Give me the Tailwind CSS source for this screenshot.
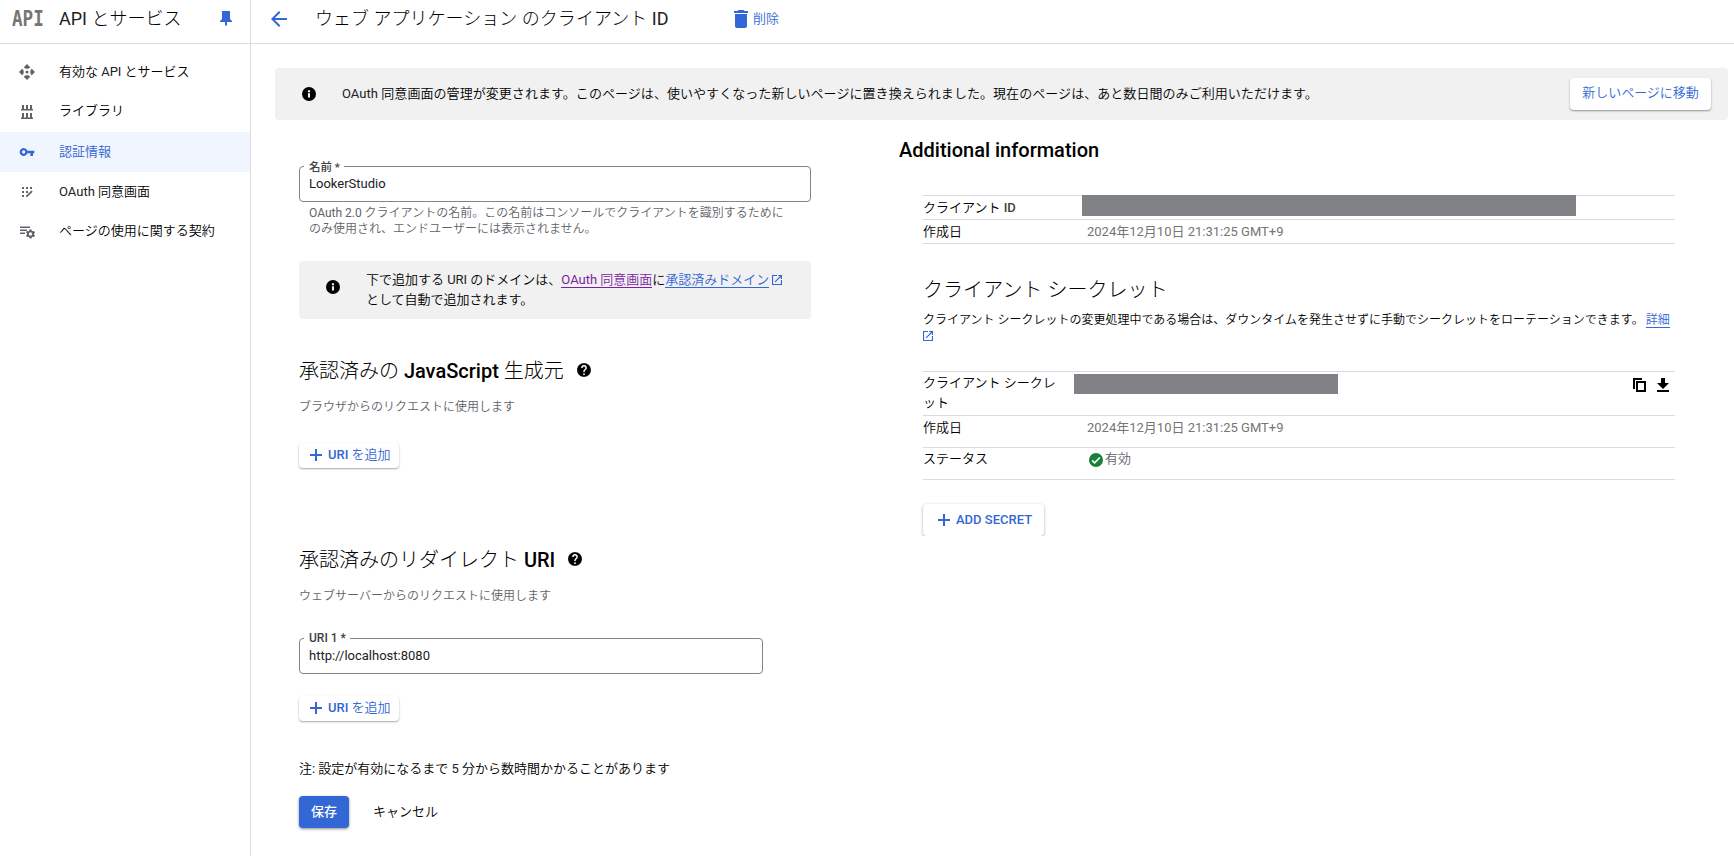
<!DOCTYPE html>
<html lang="ja">
<head>
    <meta charset="UTF-8">
    <meta name="viewport" content="width=device-width, initial-scale=1.0">
    <title>ウェブ アプリケーション のクライアント ID</title>
    <script src="https://cdn.jsdelivr.net/npm/@tailwindcss/browser@4"></script>
</head>
<body class="h-screen overflow-hidden bg-white font-['Roboto','Noto_Sans_CJK_JP',sans-serif] text-[13px] leading-5 font-[350] text-black">
    <!-- Iconos compartidos -->
    <svg class="hidden">
        <symbol id="info" viewBox="2 2 20 20"><path d="M12 2a10 10 0 1 0 0 20 10 10 0 0 0 0-20zm1.500 15h-3v-6h3v6zm0-7.500h-3V6.500h3v3z"/></symbol>
        <symbol id="help" viewBox="2 2 20 20"><path d="M12 2C6.48 2 2 6.48 2 12s4.48 10 10 10 10-4.48 10-10S17.52 2 12 2zm1 17h-2v-2h2v2zm2.07-7.75-.9.92C13.45 12.9 13 13.5 13 15h-2v-.5c0-1.1.45-2.1 1.17-2.83l1.24-1.26c.37-.36.59-.86.59-1.41 0-1.1-.9-2-2-2s-2 .9-2 2H8c0-2.21 1.79-4 4-4s4 1.79 4 4c0 .88-.36 1.68-.93 2.25z" stroke="#fff" stroke-width=".3"/></symbol>
        <symbol id="plus" viewBox="0 0 12 12"><path d="M5 0h2v5h5v2H7v5H5V7H0V5h5z"/></symbol>
        <symbol id="launch" viewBox="3 3 18 18"><path d="M19 19H5V5h7V3H3v18h18v-9h-2v7zM14 3v2h3.59l-9.83 9.83 1.41 1.41L19 6.41V10h2V3h-7z"/></symbol>
    </svg>

    <div class="flex h-full">
        <!-- Menú lateral -->
        <nav class="w-[251px] shrink-0 border-r border-[#dadce0]">
            <div class="flex h-11 items-center border-b border-[#dadce0] pb-[6px] pl-3">
                <span class="mt-[1px] w-[47px] origin-left scale-x-[0.84] font-['DejaVu_Sans_Mono'] text-[21px] leading-8 font-bold text-[#757575]">API</span>
                <span class="w-[161px] text-lg font-light"><span class="font-normal text-[#202124]">API</span> とサービス</span>
                <svg class="h-[15px] w-3 fill-[#3367d6]" viewBox="0 0 12 15"><path d="M2 0h8v8l2 2v1H7v3l-1 1-1-1v-3H0v-1l2-2z"/></svg>
            </div>
            <ul class="pt-2">
                <li class="flex h-10 items-center gap-6 pl-[19px]">
                    <svg class="size-4 fill-[#5f6368]" viewBox="0 0 16 16"><path d="M8 0l3.200 3.200-1.500 1.500L8 3 6.300 4.700 4.800 3.200zM16 8l-3.200 3.200-1.500-1.500L13 8l-1.700-1.700 1.500-1.500zM8 16l-3.200-3.200 1.500-1.500L8 13l1.700-1.700 1.500 1.500zM0 8l3.200-3.200 1.500 1.500L3 8l1.700 1.700-1.500 1.500z"/><path d="M8 1.200l2 2-2 2-2-2zM14.800 8l-2 2-2-2 2-2zM8 14.800l-2-2 2-2 2 2zM1.200 8l2-2 2 2-2 2z"/><circle cx="8" cy="8" r="1.500"/></svg>
                    <span class="-mt-[1px]">有効な <span class="font-normal text-[#202124]">API</span> とサービス</span>
                </li>
                <li class="flex h-10 items-center gap-6 pl-[19px]">
                    <svg class="size-4 fill-[#5f6368]" viewBox="0 0 16 16"><path d="M3 1h2v4h2V1h2v4h2V1h2v4h1v1.500H2V5h1zM3 9h2v4.500h2V9h2v4.500h2V9h2v4.500h1V15H2v-1.500h1z"/></svg>
                    <span class="-mt-[2px]">ライブラリ</span>
                </li>
                <li class="flex h-10 items-center gap-6 bg-[#f0f5ff] pl-[19px] text-[#3367d6]">
                    <svg class="size-4 fill-[#3367d6]" viewBox="0 0 24 24"><path d="M12.650 10A6 6 0 1 0 12.650 14H17v4h4v-4h2v-4H12.650zM7 14.500a2.500 2.500 0 1 1 0-5 2.500 2.500 0 0 1 0 5z"/></svg>
                    <span class="-mt-[1px]">認証情報</span>
                </li>
                <li class="flex h-10 items-center gap-6 pl-[19px]">
                    <svg class="size-4 fill-[#5f6368]" viewBox="0 0 16 16"><path d="M3 3h2v2H3zM7 3h2v2H7zM11 3h2v2h-2zM3 7h2v2H3zM7 7h2v2H7zM3 11h2v2H3zM12.500 6.500l1.200 1.200L8.200 13H7v-1.200z"/></svg>
                    <span><span class="font-normal text-[#202124]">OAuth</span> 同意画面</span>
                </li>
                <li class="flex h-10 items-center gap-6 pl-[19px]">
                    <svg class="size-4 fill-[#5f6368]" viewBox="0 0 16 16"><path d="M1 2.500h10V4H1zM1 5.500h7V7H1zM1 8.500h5V10H1z"/><path fill-rule="evenodd" d="M10.500 5.500h2l.3 1.300.9.500 1.300-.4 1 1.700-1 .9v1l1 .9-1 1.700-1.300-.4-.9.500-.3 1.300h-2l-.3-1.300-.9-.5-1.300.4-1-1.700 1-.9v-1l-1-.9 1-1.700 1.300.4.900-.5zM11.500 8.300a1.700 1.700 0 1 0 0 3.400 1.700 1.700 0 0 0 0-3.400z"/></svg>
                    <span class="-mt-[2px]">ページの使用に関する契約</span>
                </li>
            </ul>
        </nav>

        <main class="min-w-0 flex-1">
            <!-- Cabecera -->
            <header class="flex h-11 items-center border-b border-[#dadce0] pb-[6px] pl-5">
                <svg class="size-4 fill-[#3367d6]" viewBox="4 4 16 16"><path d="M20 11H7.830l5.590-5.590L12 4l-8 8 8 8 1.410-1.410L7.830 13H20v-2z"/></svg>
                <h1 class="ml-7 w-[419px] text-lg font-light tracking-[0.030px]">ウェブ アプリケーション のクライアント <span class="font-normal text-[#202124]">ID</span></h1>
                <svg class="h-[18px] w-[14px] fill-[#3367d6]" viewBox="5 3 14 18" preserveAspectRatio="none"><path d="M6 19c0 1.100.9 2 2 2h8c1.100 0 2-.9 2-2V7H6v12zM19 4h-3.500l-1-1h-5l-1 1H5v2h14V4z"/></svg>
                <span class="ml-[5px] text-[#3367d6]">削除</span>
            </header>

            <!-- Aviso -->
            <div class="mt-6 mr-[6px] ml-6 flex h-13 items-center rounded bg-[#f1f1f1] pr-[17px] pl-[27px]">
                <svg class="size-[14px]"><use href="#info"/></svg>
                <p class="-mt-[1px] ml-[26px] flex-1 tracking-[0.055px]"><span class="font-normal text-[#202124]">OAuth</span> 同意画面の管理が変更されます。このページは、使いやすくなった新しいページに置き換えられました。現在のページは、あと数日間のみご利用いただけます。</p>
                <button class="-mt-[1px] h-8 w-[141px] rounded bg-white pb-[1px] text-[#3367d6] shadow-[0_1px_2px_rgba(0,0,0,0.4)]">新しいページに移動</button>
            </div>

            <div class="flex">
                <!-- Formulario -->
                <section class="ml-12 w-[512px] pt-[46px]">
                    <div class="relative h-9 rounded border border-[#80868b] px-[9px] pt-[7px] font-normal text-[#202124]">
                        <span class="absolute -top-[10px] left-1 bg-white pr-1 pl-[5px] text-[11.500px] leading-5 font-medium text-[#3c4043]">名前 *</span>
                        LookerStudio
                    </div>
                    <p class="mt-[3px] pl-[10px] text-xs text-[#5f6368]"><span class="font-normal">OAuth 2.0</span> クライアントの名前。この名前はコンソールでクライアントを識別するために<br>のみ使用され、エンドユーザーには表示されません。</p>

                    <div class="mt-6 flex h-[58px] items-center rounded bg-[#f1f1f1] pl-[27px]">
                        <svg class="size-[14px] -translate-y-[3px]"><use href="#info"/></svg>
                        <p class="ml-[26px]">下で追加する <span class="font-normal text-[#202124]">URI</span> のドメインは、<a class="border-b border-[#7b1fa2] text-[#7b1fa2]"><span class="font-normal">OAuth</span> 同意画面</a>に<a class="border-b border-[#3367d6] text-[#3367d6]">承認済みドメイン</a><svg class="ml-[3px] inline size-[10px] fill-[#3367d6] align-[-1px]"><use href="#launch"/></svg><br>として自動で追加されます。</p>
                    </div>

                    <h2 class="mt-[38px] flex h-7 items-center text-xl font-light"><span>承認済みの <span class="font-medium">JavaScript</span> 生成元</span><svg class="-mt-[2px] ml-[13px] size-[14px]"><use href="#help"/></svg></h2>
                    <p class="mt-3 text-xs leading-5 text-[#5f6368]">ブラウザからのリクエストに使用します</p>
                    <button class="mt-[26px] flex h-[25px] w-[100px] items-center rounded bg-white pb-[1px] pl-[11px] text-[#3367d6] shadow-[0_1px_2px_rgba(0,0,0,0.35)]"><svg class="mr-[6px] size-3 fill-[#3367d6]"><use href="#plus"/></svg><span><span class="font-medium">URI</span> を追加</span></button>

                    <h2 class="mt-[78px] flex h-7 items-center text-xl font-light"><span>承認済みのリダイレクト <span class="font-medium">URI</span></span><svg class="-mt-[2px] ml-[13px] size-[14px]"><use href="#help"/></svg></h2>
                    <p class="mt-3 text-xs leading-5 text-[#5f6368]">ウェブサーバーからのリクエストに使用します</p>
                    <div class="relative mt-8 h-9 w-[464px] rounded border border-[#80868b] px-[9px] pt-[7px] font-normal text-[#202124]">
                        <span class="absolute -top-[11px] left-1 bg-white pr-1 pl-[5px] text-[12px] leading-5 font-medium text-[#3c4043]">URI 1 *</span>
                        http://localhost:8080
                    </div>
                    <button class="mt-[22px] flex h-[25px] w-[100px] items-center rounded bg-white pb-[1px] pl-[11px] text-[#3367d6] shadow-[0_1px_2px_rgba(0,0,0,0.35)]"><svg class="mr-[6px] size-3 fill-[#3367d6]"><use href="#plus"/></svg><span><span class="font-medium">URI</span> を追加</span></button>

                    <p class="mt-[38px]">注<span class="font-normal">:</span> 設定が有効になるまで <span class="font-normal text-[#202124]">5</span> 分から数時間かかることがあります</p>
                    <div class="mt-[17px] flex items-center gap-6">
                        <button class="h-8 w-[50px] rounded bg-[#3367d6] font-medium text-white shadow-[0_1px_3px_rgba(0,0,0,0.45)]">保存</button>
                        <button>キャンセル</button>
                    </div>
                </section>

                <!-- Información adicional -->
                <section class="ml-[88px] pt-4">
                    <h2 class="text-xl leading-7 font-medium">Additional information</h2>
                    <div class="ml-6 w-[752px]">
                        <div class="mt-[31px] border-b border-[#dadce0]">
                            <div class="flex h-6 items-center border-t border-[#dadce0]">
                                <span class="w-[159px]">クライアント <span class="font-medium text-[#3c4043]">ID</span></span>
                                <span class="-mt-[1px] h-[21px] w-[494px] self-start bg-[#808184]"></span>
                            </div>
                            <div class="flex h-6 items-center border-t border-[#dadce0]">
                                <span class="w-[164px]">作成日</span>
                                <span class="font-normal text-[#757575]">2024年12月10日 21:31:25 GMT+9</span>
                            </div>
                        </div>

                        <h2 class="mt-8 text-xl leading-7 font-light tracking-[0.050px]">クライアント シークレット</h2>
                        <p class="mt-2 text-xs leading-4">クライアント シークレットの変更処理中である場合は、ダウンタイムを発生させずに手動でシークレットをローテーションできます。<a class="ml-[2px] border-b border-[#3367d6] text-[#3367d6]">詳細</a><br><svg class="inline size-[10px] fill-[#3367d6] align-[-1px]"><use href="#launch"/></svg></p>

                        <div class="mt-[27px] border-b border-[#dadce0]">
                            <div class="flex h-11 border-t border-[#dadce0] pt-[2px]">
                                <span class="-mt-[1px] w-[135px]">クライアント シークレット</span>
                                <span class="ml-4 h-5 w-[264px] bg-[#808184]"></span>
                                <svg class="mt-1 mr-[11px] ml-auto h-[14px] w-[13px]" viewBox="0 0 13 14"><path d="M0 0h9v2H2v9H0zM3 3h10v11H3zM5 5v7h6V5z" fill-rule="evenodd"/></svg>
                                <svg class="mt-1 mr-[6px] h-[14px] w-3" viewBox="0 0 12 14"><path d="M4 0h4v5h4l-6 6-6-6h4zM0 12h12v2H0z"/></svg>
                            </div>
                            <div class="flex h-8 border-t border-[#dadce0] pt-[2px]">
                                <span class="w-[164px]">作成日</span>
                                <span class="font-normal text-[#757575]">2024年12月10日 21:31:25 GMT+9</span>
                            </div>
                            <div class="flex h-8 border-t border-[#dadce0] pt-[1px]">
                                <span class="w-[166px]">ステータス</span>
                                <svg class="mt-1 mr-[2px] size-[14px]" viewBox="2 2 20 20"><circle cx="12" cy="12" r="10" class="fill-[#188038]"/><path d="M6.500 12.500l3.500 3.500 7.500-7.500" fill="none" stroke="#fff" stroke-width="2.200"/></svg>
                                <span class="text-[#5f6368]">有効</span>
                            </div>
                        </div>

                        <!-- El contenedor recorta la sombra inferior -->
                        <div class="-ml-1 overflow-hidden pt-6 pl-1">
                            <button class="flex h-8 w-[121px] items-center rounded bg-white pl-[15px] font-medium text-[#3367d6] shadow-[0_1px_3px_rgba(0,0,0,0.35)]"><svg class="mr-[6px] size-3 fill-[#3367d6]"><use href="#plus"/></svg>ADD SECRET</button>
                        </div>
                    </div>
                </section>
            </div>
        </main>
    </div>
</body>
</html>
